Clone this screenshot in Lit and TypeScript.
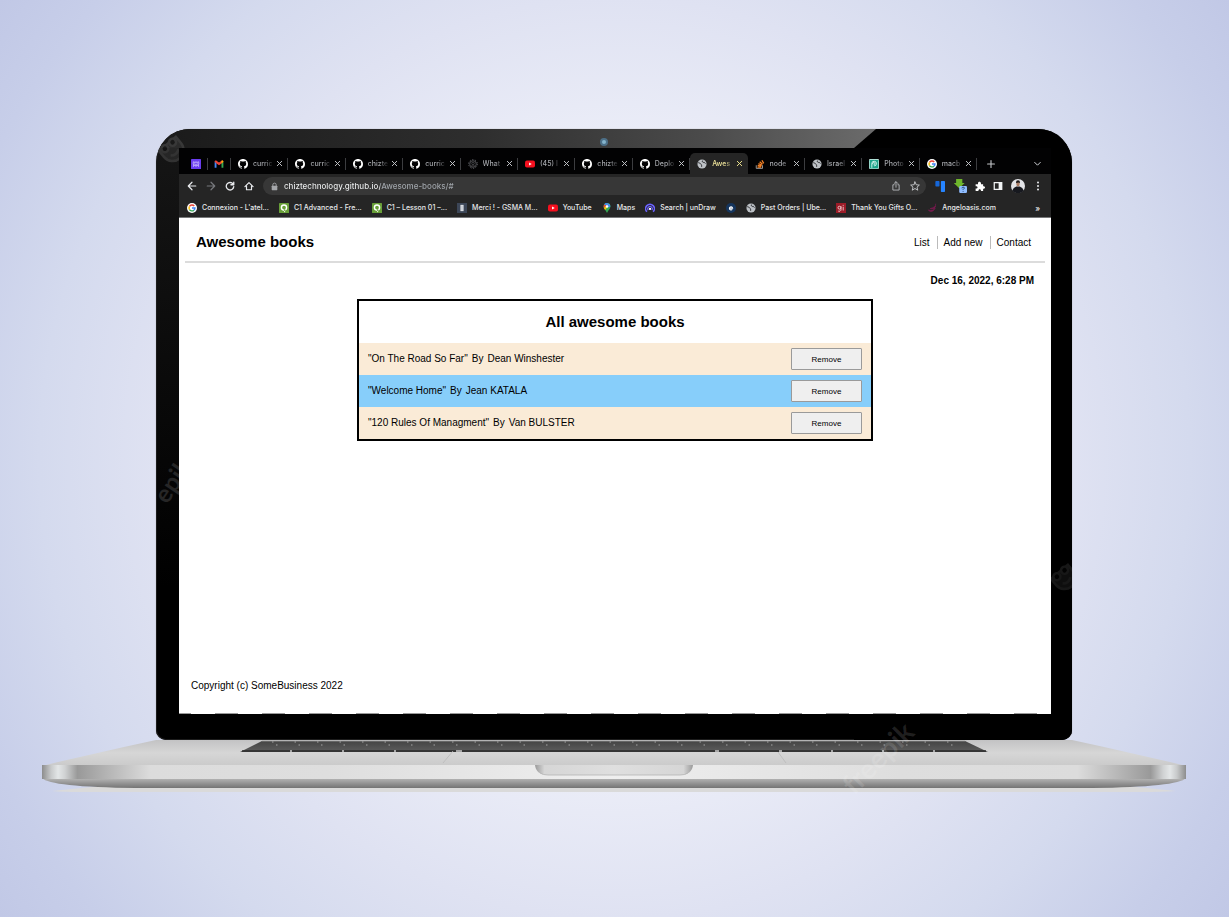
import { LitElement, html, css, svg } from "lit";
import { customElement, state } from "lit/decorators.js";
import { classMap } from "lit/directives/class-map.js";

type Book = { title: string; author: string };

const icon = (body: unknown, size = 10, box = 16) =>
  html`<svg class="icon" width=${size} height=${size} viewBox="0 0 ${box} ${box}" aria-hidden="true">${body}</svg>`;

const line = (d: string, color = "#e8eaed", w = 1.6) =>
  svg`<path d=${d} fill="none" stroke=${color} stroke-width=${w} stroke-linecap="round" stroke-linejoin="round"/>`;

const glyphs: Record<string, unknown> = {
  brand: svg`<rect width="16" height="16" rx="1" fill="#6a3df0"/><path d="M3 7l1.500-3 1.500 3 2-3 2 3 1.500-3 1.500 3M4 7v5M6 8l2 4 2-4M12 7v5M4 12l3-3M12 12L9 9" fill="none" stroke="#d9ccff" stroke-width="1.100"/>`,
  gmail: svg`<path d="M1 14V4l3 2v8z" fill="#4285f4"/><path d="M12 14V6l3-2v10z" fill="#34a853"/><path d="M1 4.500C1 2 3.500 2 4.500 3L8 5.700 11.500 3C13 2 15 2.500 15 4.500L12 7v0L8 10 4 7z" fill="#ea4335"/><path d="M12 3v4l3-2.500C15 2.500 13 2 12 3z" fill="#fbbc04"/>`,
  github: svg`<path fill="#fff" d="M8 0C3.580 0 0 3.580 0 8c0 3.540 2.290 6.530 5.470 7.590.4.070.55-.17.55-.38 0-.19-.01-.82-.01-1.490-2.010.37-2.530-.49-2.690-.94-.09-.23-.48-.94-.82-1.130-.28-.15-.68-.52-.01-.53.63-.01 1.080.58 1.230.82.72 1.210 1.870.87 2.330.66.07-.52.28-.87.51-1.070-1.780-.2-3.640-.89-3.640-3.950 0-.87.31-1.590.82-2.150-.08-.2-.36-1.020.08-2.120 0 0 .67-.21 2.200.82.64-.18 1.320-.27 2-.27s1.360.09 2 .27c1.530-1.040 2.200-.82 2.200-.82.44 1.100.16 1.920.08 2.120.51.56.82 1.270.82 2.150 0 3.070-1.870 3.750-3.650 3.950.29.25.54.73.54 1.480 0 1.070-.01 1.930-.01 2.200 0 .21.15.46.55.38A8.010 8.010 0 0 0 16 8c0-4.420-3.580-8-8-8z"/>`,
  gear: svg`<circle cx="8" cy="8" r="5.300" fill="none" stroke="#626468" stroke-width="1.300"/><circle cx="8" cy="8" r="7" fill="none" stroke="#626468" stroke-width="1.600" stroke-dasharray="2 2.400"/><circle cx="8" cy="7" r="2" fill="none" stroke="#626468"/><path d="M5 11h6" stroke="#626468"/>`,
  youtube: svg`<rect x="0" y="2.500" width="16" height="11" rx="3" fill="#f6101f"/><path d="M6.500 5.500v5L10.800 8z" fill="#fff"/>`,
  globe: svg`<circle cx="8" cy="8" r="7.300" fill="#bdc1c6"/><path d="M2 6c2-1 3 2 4.500 2.500S7 11 7.500 12.500M9 2.500C7.500 4 9.500 6 11 5.500s2 1.500 2.500 2" fill="none" stroke="#2a2b2e" stroke-width="1.600"/>`,
  stack: svg`<path d="M2 10v5h10v-5" fill="none" stroke="#a8a8a8" stroke-width="1.400"/><path d="M4 12.800h6M4.300 10.300l6 1M5.500 7.500l5.500 2.500M7.500 4.500l4.500 4M11 2l3 5" stroke="#f48024" stroke-width="2"/>`,
  photo: svg`<rect width="16" height="16" rx="2" fill="#dff5ef"/><rect x="1" y="1" width="14" height="14" rx="1" fill="#1fa58c"/><path d="M4.500 14V7a3.700 3.700 0 1 1 3.700 4M7 9a1.800 1.800 0 1 1 1.500 0" fill="none" stroke="#e8fff9" stroke-width="1.400"/>`,
  google: svg`<circle cx="8" cy="8" r="8" fill="#fff"/><g fill="none" stroke-width="2.300"><path d="M11.600 4.800A4.700 4.700 0 0 0 4 5.500" stroke="#ea4335"/><path d="M4 5.500a4.700 4.700 0 0 0 0 5" stroke="#fbbc05"/><path d="M4 10.500a4.700 4.700 0 0 0 7 1" stroke="#34a853"/><path d="M11 11.500A4.700 4.700 0 0 0 12.700 8H8" stroke="#4285f4"/></g>`,
  lesson: svg`<rect width="16" height="16" rx="1" fill="#689f38"/><path d="M8 2a5.300 5.300 0 1 1 0 10.600A5.300 5.300 0 0 1 8 2zM8 4.300a3 3 0 1 0 0 6 3 3 0 0 0 0-6zM7.500 10l1 5 3-4z" fill="#fff" fill-rule="evenodd"/>`,
  merci: svg`<rect width="16" height="16" fill="#3c4657"/><rect x="5.500" y="3" width="5" height="10" fill="#e7e9ec"/><path d="M8 4v8" stroke="#929aa6"/>`,
  maps: svg`<path d="M8 0a5.500 5.500 0 0 0-5.500 5.500C2.500 9 6 11 8 16c2-5 5.500-7 5.500-10.500A5.500 5.500 0 0 0 8 0z" fill="#34a853"/><path d="M8 0a5.500 5.500 0 0 0-4.500 2.300L7 5l3.500-4.400A6 6 0 0 0 8 0z" fill="#4285f4"/><path d="M3.500 2.300A5.500 5.500 0 0 0 3 8l4-4z" fill="#ea4335"/><path d="M3 8c.5 1 1.300 2 2 3l7-8.700L10.500 1z" fill="#fbbc04"/><path d="M10.500.6L7 5l2.500 2 4-1.500a5.500 5.500 0 0 0-3-4.900z" fill="#4285f4"/><circle cx="8" cy="5.500" r="2" fill="#fff"/>`,
  undraw: svg`<path d="M3 14A7 7 0 1 1 13 14" fill="none" stroke="#6c63ff" stroke-width="2.600"/><path d="M5.300 11.500a3.600 3.600 0 1 1 5.400 0" fill="none" stroke="#6c63ff" stroke-width="1.800"/><circle cx="8" cy="9.500" r="1.800" fill="#fff"/>`,
  e: svg`<circle cx="8" cy="8" r="8" fill="#15355d"/><path d="M5.500 8.300h5A2.500 2.500 0 1 0 10 10.200" fill="none" stroke="#fff" stroke-width="1.800"/>`,
  gi: svg`<rect width="16" height="16" fill="#9c1c28"/><g fill="none" stroke="#f3d4d6" stroke-width="1.400"><circle cx="5.500" cy="7.500" r="2.300"/><path d="M8 5v6.500q-1 2.500-4.500 1.500M11.500 6v6M11.500 3v1.500"/></g>`,
  angel: svg`<path d="M14 1c0 5-3 6-9 8 5 1 8-1 9-4M13 8c-2 4-7 5-11 3 3 4 9 3 11-3z" fill="#7d1b52" stroke="#7d1b52"/>`,
};

const TABS = [
  ["github", "curric"], ["github", "curric"], ["github", "chizte"], ["github", "curric"],
  ["gear", "What"], ["youtube", "(45) I"], ["github", "chizte"], ["github", "Deplo"],
  ["globe", "Awes"], ["stack", "node"], ["globe", "Israel"], ["photo", "Photo"], ["google", "macb"],
];

const BOOKMARKS = [
  ["google", "Connexion - L'atel..."], ["lesson", "C1 Advanced - Fre..."], ["lesson", "C1 – Lesson 01 –..."],
  ["merci", "Merci ! - GSMA M..."], ["youtube", "YouTube"], ["maps", "Maps"], ["undraw", "Search | unDraw"],
  ["e", ""], ["globe", "Past Orders | Ube..."], ["gi", "Thank You Gifts O..."], ["angel", "Angeloasis.com"],
];

@customElement("browser-chrome")
export class BrowserChrome extends LitElement {
  static styles = css`
    :host { display: block; background: #252525; color: #e8e9eb; font: 500 7px/10px Inter, Roboto, sans-serif; }
    .icon { display: block; flex: none; }
    button { appearance: none; border: 0; margin: 0; padding: 0; background: none; color: inherit; font: inherit; display: grid; place-items: center; }
    a { color: inherit; text-decoration: none; display: flex; align-items: center; gap: 5px; min-width: 0; }
    .strip { display: flex; height: 26px; padding: 5px 0 0 6px; box-sizing: border-box; background: #020203; }
    .pinned { width: 23px; justify-content: center; border-right: 1px solid #3c3d40; height: 12px; margin: 5px 0; box-sizing: border-box; flex: none; }
    .tabs { display: flex; flex: 1; min-width: 0; }
    .tab { flex: 1 1 0; min-width: 0; display: flex; align-items: center; gap: 2px; padding: 0 5px 0 7px; color: #a4a6ab; position: relative; }
    .tab::after { content: ""; position: absolute; right: 0; top: 5px; height: 12px; border-right: 1px solid #3c3d40; }
    .tab a { flex: 1; }
    .label { white-space: nowrap; overflow: hidden; flex: 1; mask-image: linear-gradient(90deg, #000 55%, transparent); }
    .active { background: #252525; border-radius: 5px 5px 0 0; color: #efe49a; }
    .active::after { display: none; }
    .close { width: 7px; height: 10px; color: #c6c8cc; }
    .active .close { color: #f2e891; }
    .strip-end { width: 74px; flex: none; display: flex; align-items: center; justify-content: space-between; padding: 0 9px; box-sizing: border-box; }
    .toolbar { display: flex; align-items: center; height: 24px; padding: 0 8px; }
    .nav { display: flex; gap: 9px; margin-right: 9px; }
    .omni { flex: 1; min-width: 0; height: 18px; border-radius: 9px; background: #373737; display: flex; align-items: center; padding: 0 6px 0 7px; gap: 5px; }
    .omni input { flex: 1; min-width: 0; border: 0; outline: 0; padding: 0; font: 500 8px/18px Inter, Roboto, sans-serif; color: transparent; background: linear-gradient(90deg, #f1f3f4 96px, #a3a8ae 96px) text; }
    .actions { display: flex; gap: 9px; }
    .ext { display: flex; align-items: center; gap: 8px; margin-left: 8px; }
    .marks { display: flex; align-items: center; height: 20px; padding: 0 8px; gap: 10px; border-bottom: 1px solid #77787a; box-sizing: border-box; white-space: nowrap; overflow: hidden; }
    .more { margin-left: auto; padding-right: 3px; font-size: 8px; }
  `;

  render() {
    const cross = icon(line("M3 3l10 10M13 3L3 13", "currentColor", 2.2), 7);
    return html`
      <div class="strip">
        <a class="pinned" href="#" aria-label="Workspace">${icon(glyphs.brand)}</a>
        <a class="pinned" href="#" aria-label="Gmail">${icon(glyphs.gmail)}</a>
        <div class="tabs">
          ${TABS.map(([g, t]) => html`
            <div class=${classMap({ tab: true, active: t === "Awes" })}>
              <a href="#">${icon(glyphs[g])}<span class="label">${t}</span></a>
              <button class="close" aria-label="Close tab">${cross}</button>
            </div>`)}
        </div>
        <div class="strip-end">
          <button aria-label="New tab">${icon(line("M8 2.500v11M2.500 8h11", "#c4c6ca", 1.8))}</button>
          <button aria-label="Tab search">${icon(line("M3 6l5 5 5-5"), 9)}</button>
        </div>
      </div>
      <div class="toolbar">
        <div class="nav">
          <button aria-label="Back">${icon(line("M14 8H2M8 2L2 8l6 6", "#e8eaed", 1.9))}</button>
          <button aria-label="Forward">${icon(line("M2 8h12M8 2l6 6-6 6", "#77797d", 1.9))}</button>
          <button aria-label="Reload">${icon(line("M13 5A6 6 0 1 0 14 9M14 2v4H9.500", "#e8eaed", 2.100))}</button>
          <button aria-label="Home">${icon(line("M1.500 9L8 2.500 14.500 9M4 8v6h8V8", "#e8eaed", 1.9))}</button>
        </div>
        <div class="omni">
          ${icon(svg`<rect x="3" y="6.500" width="10" height="8" rx="1" fill="#a4a6aa"/><path d="M5 7V5a3 3 0 0 1 6 0v2" fill="none" stroke="#a4a6aa" stroke-width="1.600"/>`, 9)}
          <input type="text" aria-label="Address" value="chiztechnology.github.io/Awesome-books/#" />
          <div class="actions">
            <button aria-label="Share">${icon(line("M5 6H3v8.500h10V6h-2M8 10V1.500M5 4l3-3 3 3", "#b9bbbf", 1.400))}</button>
            <button aria-label="Bookmark this page">${icon(line("M8 1.500l2 4.500 5 .5-3.800 3.300 1.200 4.900L8 12l-4.400 2.700 1.200-4.900L1 6.500 6 6z", "#d0d2d5", 1.400))}</button>
          </div>
        </div>
        <div class="ext">
          <button aria-label="Trello">${icon(svg`<rect x="2" y="0" width="6" height="8" rx="1" fill="#1667d9"/><rect x="10" y="0" width="6" height="16" rx="1" fill="#2684ff"/>`, 11)}</button>
          <button aria-label="Downloader">${icon(svg`<path d="M4 0h8v5h3l-7 7-7-7h3z" fill="#6fb52c"/><rect x="8" y="9" width="10" height="9" rx="1.500" fill="#8fbcff"/><path d="M11.500 12q0-1.500 1.500-1.500 2 0 1.500 1.500l-1.500 1.500v.7M13 15.500v1" stroke="#21436e" fill="none" stroke-width="1.200"/>`, 14, 18)}</button>
          <button aria-label="Extensions">${icon(svg`<path d="M1 5h4C3.500 0 10.500 0 9.500 5H13v3.500c4-.500 4 4.500 0 4V16H9.500c.500-4-4.500-4-4 0H1v-4c4 .500 4-4 0-3.500z" fill="#fff"/>`)}</button>
          <button aria-label="Side panel">${icon(svg`<path d="M1 1.500h14v13H1zM3 3.500v9h6v-9z" fill="#f1f3f4" fill-rule="evenodd"/>`)}</button>
          <button aria-label="Profile">${icon(svg`<circle cx="8" cy="8" r="8" fill="#e3e4e7"/><path d="M1.500 13q1-3.500 4.500-4.500h4q3.500 1 4.500 4.500A8 8 0 0 1 1.500 13z" fill="#17191f"/><ellipse cx="8" cy="5.500" rx="2" ry="3" fill="#a97c64"/><path d="M5.700 4.500Q5.500 1.500 8 1.500t2.300 3Q9 3.500 5.700 4.500z" fill="#1b1717"/>`, 14)}</button>
          <button aria-label="Menu">${icon(svg`<g fill="#e8eaed"><circle cx="8" cy="2.500" r="1.600"/><circle cx="8" cy="8" r="1.600"/><circle cx="8" cy="13.500" r="1.600"/></g>`)}</button>
        </div>
      </div>
      <div class="marks">
        ${BOOKMARKS.map(([g, t]) => html`<a href="#" aria-label=${t || "e"}>${icon(glyphs[g])}${t ? html`<span>${t}</span>` : ""}</a>`)}
        <button class="more" aria-label="More bookmarks">»</button>
      </div>`;
  }
}

@customElement("book-page")
export class BookPage extends LitElement {
  static styles = css`
    :host { display: flex; flex-direction: column; flex: 1; background: #fff; color: #000; font: 10px/16px "Liberation Sans", Arial, sans-serif; padding: 0 6px; }
    h1, h2 { font-size: 15px; line-height: 20px; margin: 0; }
    header { display: flex; align-items: center; justify-content: space-between; padding: 14px 7px 9px 11px; border-bottom: 2px solid #dcdcdc; }
    nav { display: flex; }
    nav a { color: inherit; text-decoration: none; padding: 0 7px 0 6px; line-height: 13px; }
    nav a + a { border-left: 1px solid #bbb; }
    time { align-self: flex-end; font-weight: 700; margin: 10px 11px 10px 0; }
    .card { width: 60%; box-sizing: border-box; margin: 0 auto; border: 2px solid #000; }
    h2 { text-align: center; padding: 11px 0; }
    ul { list-style: none; margin: 0; padding: 0; }
    li { display: flex; align-items: center; justify-content: space-between; height: 32px; padding: 0 9px; background: #faebd7; }
    li:nth-child(even) { background: #87cefa; }
    .entry { display: flex; gap: 4px; }
    .remove { appearance: none; width: 71px; height: 22px; padding: 0; border: 1px solid #9a9a9a; border-radius: 1px; background: #efefef; color: #000; font: 8px "Liberation Sans", Arial, sans-serif; }
    footer { margin-top: auto; padding: 20px 6px 19px; }
    .edge { height: 1px; margin: 0 -6px; background: repeating-linear-gradient(90deg, #999 0 12px, transparent 12px 36px, #999 36px 47px); }
  `;

  @state() private books: Book[] = [
    { title: "On The Road So Far", author: "Dean Winshester" },
    { title: "Welcome Home", author: "Jean KATALA" },
    { title: "120 Rules Of Managment", author: "Van BULSTER" },
  ];

  private remove(book: Book) {
    this.books = this.books.filter((b) => b !== book);
  }

  render() {
    return html`
      <header>
        <h1>Awesome books</h1>
        <nav><a href="#">List</a><a href="#">Add new</a><a href="#">Contact</a></nav>
      </header>
      <time datetime="2022-12-16T18:28">Dec 16, 2022, 6:28 PM</time>
      <section class="card">
        <h2>All awesome books</h2>
        <ul>
          ${this.books.map((b) => html`
            <li>
              <span class="entry"><span>"${b.title}"</span><span>By</span><span>${b.author}</span></span>
              <button class="remove" @click=${() => this.remove(b)}>Remove</button>
            </li>`)}
        </ul>
      </section>
      <footer>Copyright (c) SomeBusiness 2022</footer>
      <div class="edge"></div>`;
  }
}

@customElement("app-root")
export class AppRoot extends LitElement {
  static styles = css`
    :host { display: flex; flex-direction: column; min-height: 100vh; box-sizing: border-box; padding: 129px 43px 125px 42px; background: radial-gradient(circle farthest-corner at center, #f1f2fa 0%, #eaecf7 43%, #dfe2f2 60%, #d4daee 75%, #c7cee9 90%, #c1c8e6 100%); }
    .lid { position: relative; flex: 1; display: flex; flex-direction: column; margin: 0 114px; padding: 19px 21px 26px 23px; border-radius: 34px 34px 10px 10px; overflow: hidden; background: linear-gradient(180deg, #161616, #000 75%); box-shadow: inset 0 0 0 1px #1c1c1c, 0 0 1px #888; }
    .gloss { position: absolute; inset: 0 0 auto 0; height: 19px; background: linear-gradient(90deg, #1a1a1a, #2e2e2e 35%, #4b4b4b 60%, #6c6c6c 79%); clip-path: polygon(0 0, calc(100% - 196px) 0, calc(100% - 218px) 100%, 0 100%); }
    .dark { position: absolute; inset: 0 0 0 auto; width: 218px; background: #000; }
    .camera { position: absolute; top: 9px; left: calc(50% - 14px); width: 4px; height: 4px; border: 2px solid #4d7088; border-radius: 50%; background: #85b4cc; }
    .screen { position: relative; flex: 1; display: flex; flex-direction: column; }
    .robot { position: absolute; opacity: 0.13; }
    .robot-top { left: -2px; top: 2px; opacity: 0.18; }
    .robot-right { right: -6px; top: 430px; opacity: 0.12; }
    .mark { position: absolute; left: -8px; top: 318px; }
    .base { position: relative; display: block; width: 100%; height: 52px; overflow: visible; }
  `;

  private robot(cls: string) {
    return html`<svg class="robot ${cls}" width="32" height="32" viewBox="0 0 32 32" aria-hidden="true">
      <g transform="rotate(-40 16 16)" fill="none" stroke="#bbb" stroke-width="2.500"><path d="M5 12h22v8a11 11 0 0 1-22 0z" fill="#777"/><circle cx="11" cy="14" r="3.500" fill="#111"/><circle cx="21" cy="14" r="3.500" fill="#111"/><path d="M11 23q5 4 10 0"/></g>
    </svg>`;
  }

  render() {
    const keys = (y: number, from: number, to: number, shift: number) =>
      svg`<path d="M${from + shift} ${y}H${to}" stroke="#a4a4a4" stroke-width="1" stroke-dasharray="1.500 21"/>`;
    return html`
      <div class="lid">
        <div class="dark"></div>
        <div class="gloss"></div>
        ${this.robot("robot-top")}${this.robot("robot-right")}
        <svg class="mark" width="60" height="70" viewBox="0 0 60 70" aria-hidden="true">
          <text x="19" y="58" transform="rotate(-56 19 58)" fill="#262626" font-family="Lato, sans-serif" font-weight="700" font-size="25">epik</text>
        </svg>
        <div class="camera"></div>
        <div class="screen">
          <browser-chrome></browser-chrome>
          <book-page></book-page>
        </div>
      </div>
      <svg class="base" viewBox="0 0 1144 52" preserveAspectRatio="none" aria-hidden="true">
        <defs>
          <linearGradient id="deck" x1="0" y1="0" x2="0" y2="1"><stop offset="0" stop-color="#c3c3c4"/><stop offset="0.500" stop-color="#d6d6d6"/><stop offset="1" stop-color="#cacaca"/></linearGradient>
          <linearGradient id="front"><stop offset="0" stop-color="#8d8d8d"/><stop offset="0.008" stop-color="#c8cacb"/><stop offset="0.014" stop-color="#e3e6e7"/><stop offset="0.020" stop-color="#d0d2d3"/><stop offset="0.031" stop-color="#999"/><stop offset="0.050" stop-color="#adadad"/><stop offset="0.095" stop-color="#dcdcdc"/><stop offset="0.250" stop-color="#dedede"/><stop offset="0.500" stop-color="#efefef"/><stop offset="0.750" stop-color="#dedede"/><stop offset="0.905" stop-color="#dcdcdc"/><stop offset="0.950" stop-color="#adadad"/><stop offset="0.969" stop-color="#999"/><stop offset="0.980" stop-color="#d0d2d3"/><stop offset="0.986" stop-color="#e3e6e7"/><stop offset="0.992" stop-color="#c8cacb"/><stop offset="1" stop-color="#8d8d8d"/></linearGradient>
          <linearGradient id="under" x1="0" y1="0" x2="0" y2="1"><stop offset="0" stop-color="#b8b8b8"/><stop offset="0.450" stop-color="#999"/><stop offset="1" stop-color="#747474"/></linearGradient>
          <linearGradient id="keys" x1="0" y1="0" x2="0" y2="1"><stop offset="0" stop-color="#444"/><stop offset="0.800" stop-color="#585858"/><stop offset="1" stop-color="#505050"/></linearGradient>
          <linearGradient id="notch"><stop offset="0" stop-color="#9a9a9a"/><stop offset="0.060" stop-color="#d6d6d6"/><stop offset="0.500" stop-color="#dfdfdf"/><stop offset="0.940" stop-color="#d6d6d6"/><stop offset="1" stop-color="#9a9a9a"/></linearGradient>
        </defs>
        <path d="M10 51L50 47H1094L1134 51Q1120 52 1100 52H40Q20 52 10 51z" fill="#dadada"/>
        <path d="M114 0H1030L1062 7L1128 22L1144 26H0L16 22L82 7z" fill="url(#deck)"/>
        <path d="M220 1H923L946 12H198z" fill="url(#keys)"/>
        <path d="M220 1H923" stroke="#999" stroke-width="0.800"/>
        ${keys(2, 222, 922, 8)}${keys(5, 214, 930, 20)}
        <path d="M200 11H944" stroke="#2d2d2d" stroke-width="1.600"/>
        <path d="M248 11h2m50 0h2m50 0h2m60 0h6m253 0h4m60 0h3m49 0h2m49 0h2m49 0h2" stroke="#ccc" stroke-width="1.400"/>
        <path d="M411 11l-10 12M736 12l8 11" stroke="#bababa" stroke-width="0.800"/>
        <path d="M0 38H1144Q1136 47 1050 48H94Q8 47 0 38z" fill="url(#under)"/>
        <path d="M0 25H1144V39H0z" fill="url(#front)"/>
        <path d="M493 25H651Q650 35 638 35H506Q494 35 493 25z" fill="url(#notch)"/>
        <path d="M498 33Q501 35 506 35H638Q643 35 646 33" fill="none" stroke="#b4b4b4" stroke-width="0.800"/>
        <text x="812" y="56" transform="rotate(-45 812 56)" fill="#fff" fill-opacity="0.130" font-family="Lato, sans-serif" font-weight="700" font-size="28">freepik</text>
      </svg>`;
  }
}
